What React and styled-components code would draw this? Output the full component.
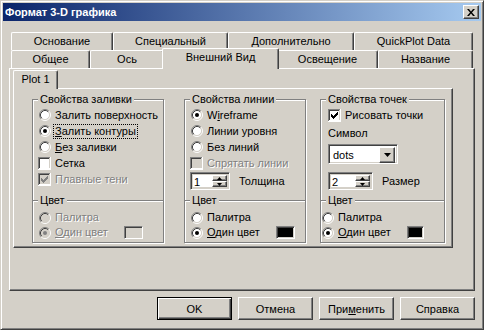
import React from 'react';
import styled, { createGlobalStyle, css } from 'styled-components';

const GlobalStyle = createGlobalStyle`
  html, body { margin: 0; padding: 0; background: #d4d0c8; }
  #root { width: 484px; height: 330px; }
`;

const raised = css`
  border: 1px solid;
  border-color: #fff #404040 #404040 #fff;
  box-shadow: inset -1px -1px 0 #808080, inset 1px 1px 0 #d4d0c8;
`;

const sunken = css`
  border: 1px solid;
  border-color: #808080 #fff #fff #808080;
  box-shadow: inset 1px 1px 0 #404040, inset -1px -1px 0 #d4d0c8;
`;

const Window = styled.div`
  box-sizing: border-box;
  width: 484px;
  height: 330px;
  background: #d4d0c8;
  border: 1px solid;
  border-color: #d4d0c8 #404040 #404040 #d4d0c8;
  box-shadow: inset 1px 1px 0 #fff, inset -1px -1px 0 #808080;
  padding: 2px;
  display: flex;
  flex-direction: column;
  font-family: "Liberation Sans", Arial, sans-serif;
  font-size: 11px;
  color: #000;
`;

const TitleBar = styled.div`
  height: 18px;
  flex: none;
  display: flex;
  align-items: center;
  justify-content: space-between;
  padding: 0 2px;
  background: linear-gradient(to right, #0a246a, #a6caf0);
  color: #fff;
  font-weight: bold;
  font-size: 11px;
`;

const CloseButton = styled.div`
  box-sizing: border-box;
  width: 16px;
  height: 14px;
  background: #d4d0c8;
  ${raised};
  display: flex;
  align-items: center;
  justify-content: center;
`;

const Body = styled.div`
  flex: 1;
  display: flex;
  flex-direction: column;
  padding: 11px 6px 0 6px;
`;

const TabStrip = styled.div`
  display: flex;
  flex-direction: column;
  padding: 0 2px;
`;

const TabRow = styled.div`
  display: flex;
  height: 18px;
`;

const Tab = styled.div`
  box-sizing: border-box;
  flex: none;
  width: ${p => p.$w}px;
  height: 18px;
  background: #d4d0c8;
  border-top: 1px solid #fff;
  border-left: 1px solid #fff;
  border-right: 1px solid #404040;
  border-top-left-radius: 2px;
  border-top-right-radius: 2px;
  box-shadow: inset -1px 0 0 #808080;
  display: flex;
  align-items: center;
  justify-content: center;
  line-height: 13px;
  white-space: nowrap;
  ${p => p.$active && css`
    width: ${p.$w + 4}px;
    height: 21px;
    margin: -2px -2px -1px;
    position: relative;
    z-index: 1;
    align-items: flex-start;
    padding-top: 2px;
  `}
`;

const Panel = styled.div`
  box-sizing: border-box;
  height: 223px;
  border: 1px solid;
  border-color: #fff #404040 #404040 #fff;
  box-shadow: inset -1px -1px 0 #808080;
  padding: 1px 3px 0 3px;
`;

const InnerTabRow = styled.div`
  display: flex;
  height: 18px;
`;

const InnerTab = styled.div`
  box-sizing: border-box;
  width: 45px;
  height: 19px;
  margin-bottom: -1px;
  position: relative;
  z-index: 1;
  background: #d4d0c8;
  border-top: 1px solid #fff;
  border-left: 1px solid #fff;
  border-right: 1px solid #404040;
  border-top-left-radius: 2px;
  border-top-right-radius: 2px;
  box-shadow: inset -1px 0 0 #808080;
  display: flex;
  justify-content: center;
  padding-top: 2px;
  line-height: 13px;
`;

const InnerPage = styled.div`
  box-sizing: border-box;
  width: 440px;
  height: 160px;
  border: 1px solid;
  border-color: #fff #404040 #404040 #fff;
  box-shadow: inset -1px -1px 0 #808080;
  padding: 10px 0 0 18px;
  display: flex;
  align-items: flex-start;
`;

const GroupBox = styled.div`
  position: relative;
  box-sizing: border-box;
  flex: none;
  width: ${p => p.$w}px;
  height: 144px;
  margin-left: ${p => p.$ml || 0}px;
  border: 1px solid #808080;
  box-shadow: inset 1px 1px 0 #fff, 1px 1px 0 #fff;
  display: flex;
  flex-direction: column;
`;

const MainSection = styled.div`
  flex: 1;
  display: flex;
  flex-direction: column;
  padding: 7px 0 0 ${p => p.$pl}px;
`;

const ColorSection = styled.div`
  position: relative;
  box-sizing: border-box;
  height: 42px;
  flex: none;
  border-top: 1px solid #808080;
  box-shadow: inset 0 1px 0 #fff;
  padding: 9px 0 0 ${p => p.$pl}px;
  display: flex;
  flex-direction: column;
`;

const Legend = styled.span`
  position: absolute;
  top: -7px;
  left: 5px;
  padding: 0 2px;
  line-height: 13px;
  background: #d4d0c8;
  white-space: nowrap;
`;

const Row = styled.div`
  display: flex;
  align-items: center;
  gap: 4px;
  height: ${p => p.$h || 16}px;
  margin-top: ${p => p.$mt || 0}px;
  white-space: nowrap;
`;

const Slot = styled.span`
  width: 13px;
  height: 13px;
  flex: none;
  display: flex;
  align-items: center;
  svg { display: block; }
`;

const Label = styled.span`
  line-height: 13px;
  min-width: ${p => p.$w ? `${p.$w}px` : 'auto'};
  ${p => p.$disabled && css`
    color: #808080;
    text-shadow: 1px 1px 0 #fff;
  `}
  ${p => p.$focus && css`
    outline: 1px dotted #000;
    outline-offset: 0;
    padding: 0 1px;
    margin-left: -1px;
  `}
`;

const Swatch = styled.span`
  box-sizing: border-box;
  flex: none;
  width: ${p => p.$w}px;
  height: 13px;
  background: ${p => p.$color};
  ${sunken};
`;

const Spinner = styled.div`
  box-sizing: border-box;
  width: ${p => p.$w}px;
  height: 18px;
  flex: none;
  ${sunken};
  padding: 2px;
  display: flex;
`;

const SpinValue = styled.span`
  flex: 1;
  background: #fff;
  padding-left: 1px;
  line-height: 14px;
`;

const SpinButtons = styled.span`
  width: 15px;
  display: flex;
  flex-direction: column;
`;

const SpinButton = styled.span`
  box-sizing: border-box;
  flex: 1;
  background: #d4d0c8;
  ${raised};
  display: flex;
  align-items: center;
  justify-content: center;
  svg { display: block; }
`;

const Select = styled.div`
  box-sizing: border-box;
  width: 70px;
  height: 20px;
  flex: none;
  ${sunken};
  padding: 2px;
  display: flex;
  background: #fff;
`;

const SelectValue = styled.span`
  flex: 1;
  padding-left: 2px;
  line-height: 16px;
`;

const SelectButton = styled.span`
  box-sizing: border-box;
  width: 16px;
  height: 16px;
  background: #d4d0c8;
  ${raised};
  display: flex;
  align-items: center;
  justify-content: center;
  svg { display: block; }
`;

const ButtonRow = styled.div`
  display: flex;
  justify-content: flex-end;
  gap: 6px;
  margin-top: 6px;
`;

const Button = styled.div`
  box-sizing: border-box;
  width: 75px;
  height: 23px;
  background: #d4d0c8;
  display: flex;
  align-items: center;
  justify-content: center;
  ${p => p.$default ? css`
    border: 1px solid #000;
    box-shadow: inset 1px 1px 0 #fff, inset -1px -1px 0 #404040, inset -2px -2px 0 #808080;
  ` : raised};
`;

function Radio({ checked, disabled }) {
  return (
    <svg width="12" height="12" viewBox="0 0 12 12" style={{ marginLeft: 1 }}>
      <circle cx="6" cy="6" r="4.5" fill={disabled ? '#d4d0c8' : '#fff'} />
      <path d="M2.11 9.89 A5.5 5.5 0 0 1 9.89 2.11" fill="none" stroke="#808080" />
      <path d="M9.89 2.11 A5.5 5.5 0 0 1 2.11 9.89" fill="none" stroke="#fff" />
      <path d="M2.82 9.18 A4.5 4.5 0 0 1 9.18 2.82" fill="none" stroke="#404040" />
      <path d="M9.18 2.82 A4.5 4.5 0 0 1 2.82 9.18" fill="none" stroke="#d4d0c8" />
      {checked && <circle cx="6" cy="6" r="2" fill={disabled ? '#808080' : '#000'} />}
    </svg>
  );
}

function Check({ checked, disabled }) {
  const ys = [5, 6, 7, 6, 5, 4, 3];
  return (
    <svg width="13" height="13" viewBox="0 0 13 13">
      <rect x="0" y="0" width="13" height="13" fill="#fff" />
      <path d="M0 0h12v1H1v11H0z" fill="#808080" />
      <path d="M1 1h10v1H2v9H1z" fill="#404040" />
      <path d="M1 11h11V1h-1v10H1z" fill="#d4d0c8" />
      <rect x="2" y="2" width="9" height="9" fill={disabled ? '#d4d0c8' : '#fff'} />
      {checked && ys.map((y, i) => (
        <rect key={i} x={3 + i} y={y} width="1" height="3" fill={disabled ? '#808080' : '#000'} />
      ))}
    </svg>
  );
}

const Arrow = ({ up, w = 5, h = 3 }) => (
  <svg width={w} height={h} viewBox={`0 0 ${w} ${h}`}>
    <path d={up ? `M0 ${h}H${w}L${w / 2} 0z` : `M0 0H${w}L${w / 2} ${h}z`} fill="#000" />
  </svg>
);

const CloseGlyph = () => (
  <svg width="8" height="7" viewBox="0 0 8 7">
    <path d="M0 0h2l2 2.4L6 0h2L5 3.5 8 7H6L4 4.6 2 7H0l3-3.5z" fill="#000" />
  </svg>
);

const RadioRow = ({ checked, disabled, children, focus, h, w }) => (
  <Row $h={h}>
    <Slot><Radio checked={checked} disabled={disabled} /></Slot>
    <Label $disabled={disabled} $focus={focus} $w={w}>{children}</Label>
  </Row>
);

const CheckRow = ({ checked, disabled, children, h }) => (
  <Row $h={h}>
    <Slot><Check checked={checked} disabled={disabled} /></Slot>
    <Label $disabled={disabled}>{children}</Label>
  </Row>
);

const SpinRow = ({ value, w, label, mt }) => (
  <Row $h={18} $mt={mt} style={{ gap: 9 }}>
    <Spinner $w={w}>
      <SpinValue>{value}</SpinValue>
      <SpinButtons>
        <SpinButton><Arrow up /></SpinButton>
        <SpinButton><Arrow /></SpinButton>
      </SpinButtons>
    </Spinner>
    <Label>{label}</Label>
  </Row>
);

const ColorBlock = ({ pl, disabled, swatchW, swatchColor }) => (
  <ColorSection $pl={pl}>
    <Legend>Цвет</Legend>
    <RadioRow h={15} disabled={disabled}>Палитра</RadioRow>
    <Row $h={15}>
      <Slot><Radio checked disabled={disabled} /></Slot>
      <Label $disabled={disabled} $w={65}><u>О</u>дин цвет</Label>
      <Swatch $w={swatchW} $color={swatchColor} />
    </Row>
  </ColorSection>
);

const row1 = [['Основание', 102], ['Специальный', 115], ['Дополнительно', 126], ['QuickPlot Data', 119]];
const row2 = [['Общее', 79], ['Ось', 74], ['Внешний Вид', 113, true], ['Освещение', 101], ['Название', 95]];

export default function App() {
  return (
    <>
      <GlobalStyle />
      <Window>
        <TitleBar>
          <span>Формат 3-D графика</span>
          <CloseButton><CloseGlyph /></CloseButton>
        </TitleBar>
        <Body>
          <TabStrip>
            <TabRow>
              {row1.map(([t, w]) => <Tab key={t} $w={w}>{t}</Tab>)}
            </TabRow>
            <TabRow>
              {row2.map(([t, w, a]) => <Tab key={t} $w={w} $active={a}>{t}</Tab>)}
            </TabRow>
          </TabStrip>
          <Panel>
            <InnerTabRow>
              <InnerTab>Plot 1</InnerTab>
            </InnerTabRow>
            <InnerPage>
              <GroupBox $w={132}>
                <MainSection $pl={5}>
                  <Legend>Свойства заливки</Legend>
                  <RadioRow>Залить поверхность</RadioRow>
                  <RadioRow checked focus><u>З</u>алить контуры</RadioRow>
                  <RadioRow><u>Б</u>ез заливки</RadioRow>
                  <CheckRow>Сетка</CheckRow>
                  <CheckRow checked disabled>Плавные тени</CheckRow>
                </MainSection>
                <ColorBlock pl={5} disabled swatchW={19} swatchColor="#d4d0c8" />
              </GroupBox>
              <GroupBox $w={122} $ml={20}>
                <MainSection $pl={5}>
                  <Legend>Свойства линии</Legend>
                  <RadioRow checked>W<u>i</u>reframe</RadioRow>
                  <RadioRow>Линии уровня</RadioRow>
                  <RadioRow>Без линий</RadioRow>
                  <CheckRow disabled>Спрятать линии</CheckRow>
                  <SpinRow value="1" w={40} label="Толщина" mt={1} />
                </MainSection>
                <ColorBlock pl={5} swatchW={19} swatchColor="#000" />
              </GroupBox>
              <GroupBox $w={125} $ml={14}>
                <MainSection $pl={7}>
                  <Legend>Свойства точек</Legend>
                  <CheckRow checked>Рисовать точки</CheckRow>
                  <Row $mt={2}><Label>Символ</Label></Row>
                  <Row $h={20} $mt={3}>
                    <Select>
                      <SelectValue>dots</SelectValue>
                      <SelectButton><Arrow w={7} h={4} /></SelectButton>
                    </Select>
                  </Row>
                  <SpinRow value="2" w={45} label="Размер" mt={8} />
                </MainSection>
                <ColorBlock pl={0} swatchW={17} swatchColor="#000" />
              </GroupBox>
            </InnerPage>
          </Panel>
          <ButtonRow>
            <Button $default>OK</Button>
            <Button>Отмена</Button>
            <Button>При<u>м</u>енить</Button>
            <Button>Справка</Button>
          </ButtonRow>
        </Body>
      </Window>
    </>
  );
}
